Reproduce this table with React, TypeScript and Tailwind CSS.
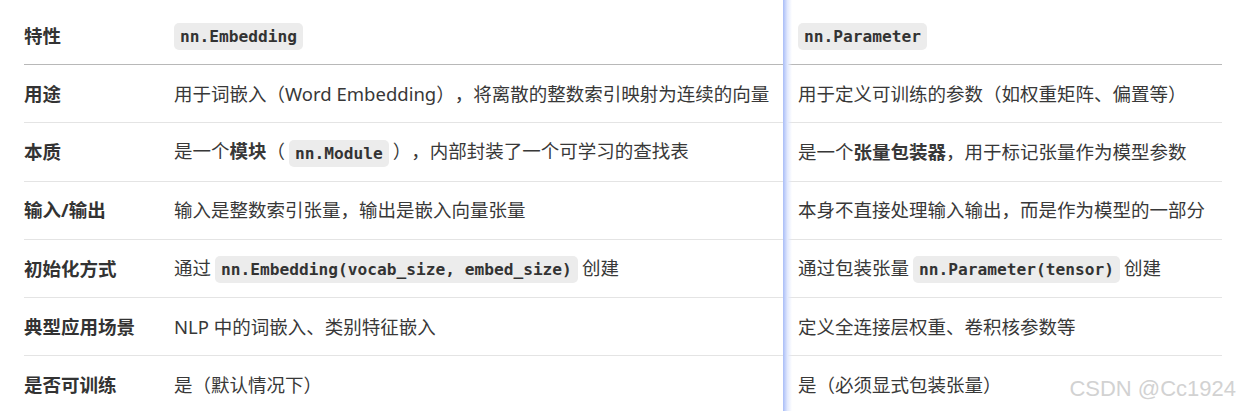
import React from 'react';

const sans = "font-['Noto_Sans','Noto_Sans_CJK_SC',sans-serif]";
const mono = "font-['DejaVu_Sans_Mono','Noto_Sans_CJK_SC',monospace]";
const codeCls = `${mono} inline-block font-bold text-[16.2px] leading-[27px] bg-[#ececec] text-[#333] rounded-[5px] px-[6px] align-middle`;

const Code: React.FC<{ children: React.ReactNode }> = ({ children }) => (
  <code className={`${codeCls} mx-[4px]`}>{children}</code>
);

type Row = { label: string; a: React.ReactNode; b: React.ReactNode };

const rows: Row[] = [
  {
    label: '用途',
    a: '用于词嵌入（Word Embedding），将离散的整数索引映射为连续的向量',
    b: '用于定义可训练的参数（如权重矩阵、偏置等）',
  },
  {
    label: '本质',
    a: (
      <>
        是一个<b>模块</b>（<Code>nn.Module</Code>），内部封装了一个可学习的查找表
      </>
    ),
    b: (
      <>
        是一个<b>张量包装器</b>，用于标记张量作为模型参数
      </>
    ),
  },
  {
    label: '输入/输出',
    a: '输入是整数索引张量，输出是嵌入向量张量',
    b: '本身不直接处理输入输出，而是作为模型的一部分',
  },
  {
    label: '初始化方式',
    a: (
      <>
        通过<Code>nn.Embedding(vocab_size, embed_size)</Code>创建
      </>
    ),
    b: (
      <>
        通过包装张量<Code>nn.Parameter(tensor)</Code>创建
      </>
    ),
  },
  {
    label: '典型应用场景',
    a: 'NLP 中的词嵌入、类别特征嵌入',
    b: '定义全连接层权重、卷积核参数等',
  },
  {
    label: '是否可训练',
    a: '是（默认情况下）',
    b: '是（必须显式包装张量）',
  },
];

export default function App() {
  return (
    <div className={`relative w-[1240px] h-[411px] overflow-hidden bg-white ${sans} text-[18.5px] text-[#383838] [text-spacing-trim:space-all]`}>
      <div className="pl-[24px] pr-[18px] pt-[7px]">
        {/* header */}
        <div className="grid grid-cols-[150px_609px_1fr] items-center h-[58px] border-b border-[#b8b8b8]">
          <div className="font-bold text-[#333]">特性</div>
          <div>
            <code className={codeCls}>nn.Embedding</code>
          </div>
          <div className="pl-[15px]">
            <code className={codeCls}>nn.Parameter</code>
          </div>
        </div>
        {rows.map((r) => (
          <div key={r.label} className="grid grid-cols-[150px_609px_1fr] items-center h-[58.3px] border-b border-[#e4e4e4]">
            <div className="font-bold text-[#333]">{r.label}</div>
            <div className="whitespace-nowrap">{r.a}</div>
            <div className="pl-[15px] whitespace-nowrap">{r.b}</div>
          </div>
        ))}
      </div>

      {/* column resize indicator */}
      <div className="absolute top-0 bottom-0 left-[783px] w-[9px] bg-gradient-to-r from-[#a9bdf7] via-[#e2e9fd] to-transparent pointer-events-none" />

      {/* watermark */}
      <div className="absolute right-[4px] bottom-[6px] font-['Liberation_Sans',sans-serif] text-[22px] text-[#d2d2d2]">
        CSDN @Cc1924
      </div>
    </div>
  );
}
